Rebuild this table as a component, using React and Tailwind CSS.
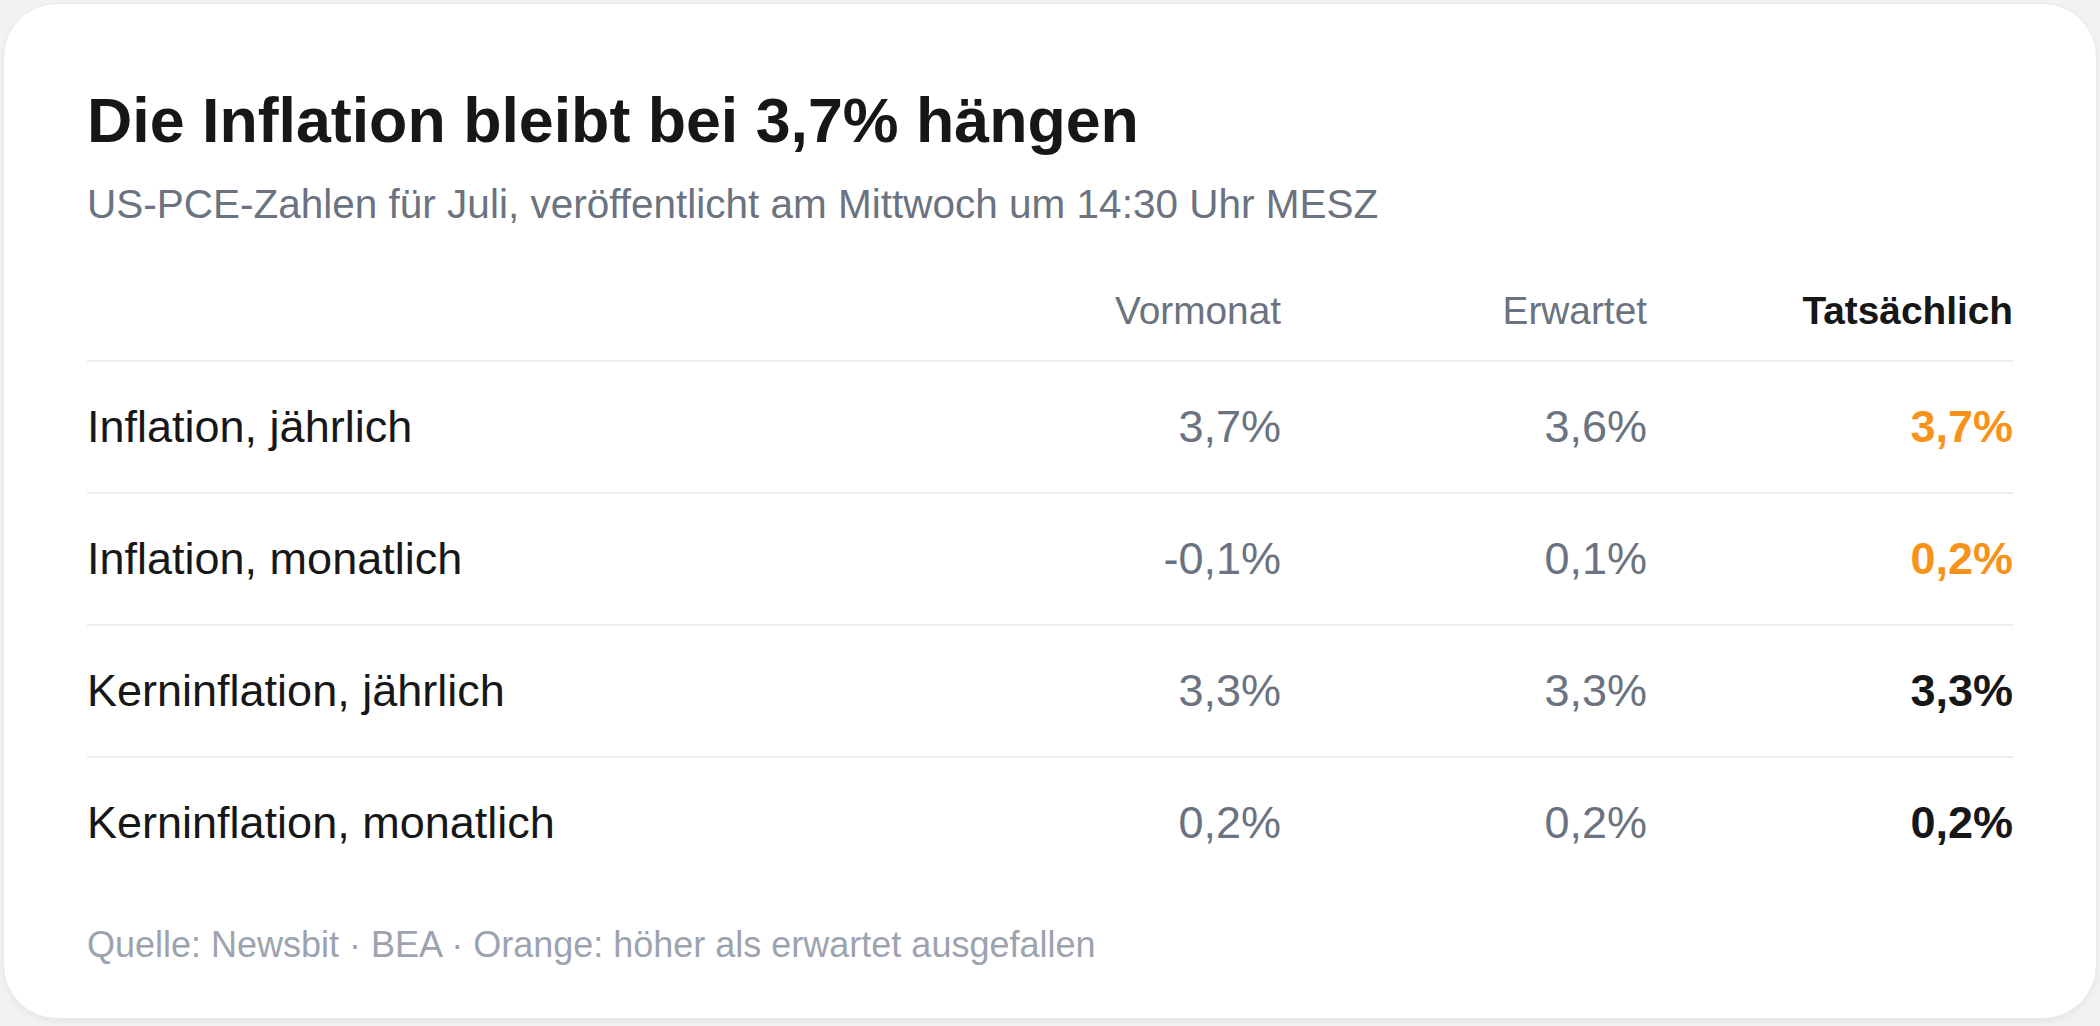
import React from "react";

const rows = [
  { label: "Inflation, jährlich", prev: "3,7%", expected: "3,6%", actual: "3,7%", hot: true },
  { label: "Inflation, monatlich", prev: "-0,1%", expected: "0,1%", actual: "0,2%", hot: true },
  { label: "Kerninflation, jährlich", prev: "3,3%", expected: "3,3%", actual: "3,3%", hot: false },
  { label: "Kerninflation, monatlich", prev: "0,2%", expected: "0,2%", actual: "0,2%", hot: false },
];

function App() {
  return (
    <div
      className="min-h-screen bg-[#f1f2f4] p-[3px]"
      style={{ fontFamily: '"Liberation Sans", Arial, sans-serif' }}
    >
      <div className="rounded-[54px] border border-[#e8e9eb] bg-white px-[83px] pt-[82px] pb-[46px] shadow-[0_3px_6px_rgba(0,0,0,0.05)]">
        <h1 className="text-[62.7px] font-bold leading-[1.1] text-[#171717]">
          Die Inflation bleibt bei 3,7% hängen
        </h1>
        <p className="mt-[19px] text-[40.5px] leading-[60px] text-[#6b7280]">
          US-PCE-Zahlen für Juli, veröffentlicht am Mittwoch um 14:30 Uhr MESZ
        </p>

        <div className="mt-[48px]">
          <div className="grid grid-cols-[1fr_366px_366px_366px] pb-[21px] text-[38.8px] leading-[57px]">
            <div></div>
            <div className="text-right text-[#6b7280]">Vormonat</div>
            <div className="text-right text-[#6b7280]">Erwartet</div>
            <div className="text-right font-bold text-[#171717]">Tatsächlich</div>
          </div>
          {rows.map((row) => (
            <div
              key={row.label}
              className="grid grid-cols-[1fr_366px_366px_366px] border-t-2 border-[#ececee] pt-[31px] pb-[31px] text-[45px] leading-[68px]"
            >
              <div className="text-[#171717]">{row.label}</div>
              <div className="text-right text-[#6b7280]">{row.prev}</div>
              <div className="text-right text-[#6b7280]">{row.expected}</div>
              <div
                className={
                  row.hot
                    ? "text-right font-bold text-[#f7931a]"
                    : "text-right font-bold text-[#171717]"
                }
              >
                {row.actual}
              </div>
            </div>
          ))}
        </div>

        <p className="mt-[30px] text-[36px] leading-[54px] text-[#9ca3af]">
          Quelle: Newsbit · BEA · Orange: höher als erwartet ausgefallen
        </p>
      </div>
    </div>
  );
}

export default App;
